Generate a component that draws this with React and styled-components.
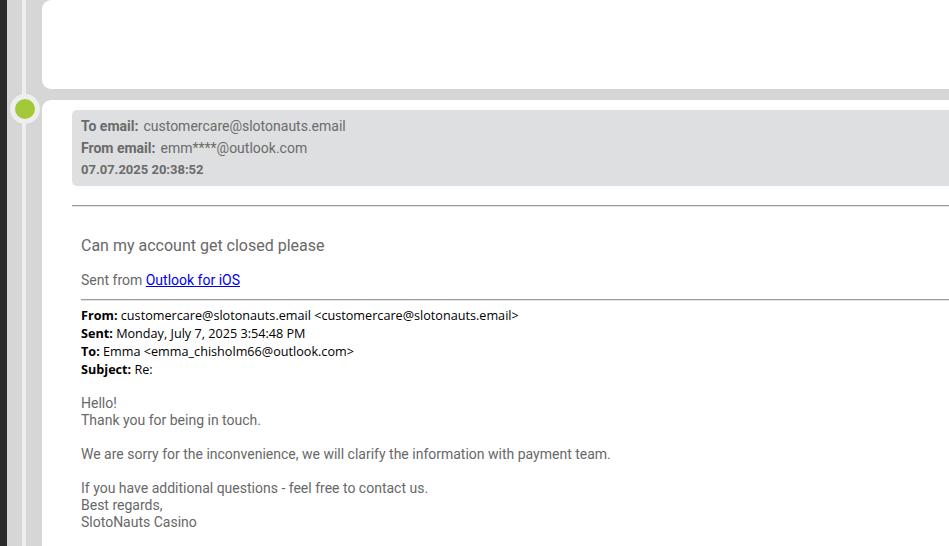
import React from 'react';
import styled, { createGlobalStyle } from 'styled-components';

const Global = createGlobalStyle`
  html, body { margin: 0; padding: 0; }
  body {
    background: #d6d6d6;
    font-family: Roboto, "Liberation Sans", sans-serif;
  }
`;

const Page = styled.div`
  display: flex;
  height: 546px;
  overflow: hidden;
`;

const Edge = styled.div`
  width: 7px;
  flex: none;
  background: #2b2b2b;
`;

const Timeline = styled.div`
  flex: 1;
  min-width: 0;
  overflow: hidden;
  background:
    linear-gradient(to right, transparent 15px, #eeeeef 15px, #eeeeef 19px, transparent 19px),
    #d6d6d6;
  display: flex;
  flex-direction: column;
  gap: 11px;
`;

const Entry = styled.div`
  display: grid;
  grid-template-columns: 35px 1fr;
`;

const Rail = styled.div`
  display: flex;
  justify-content: center;
  align-items: flex-start;
`;

const Dot = styled.div`
  width: 30px;
  height: 30px;
  box-sizing: border-box;
  border-radius: 50%;
  background: #a3c93a;
  border: 5px solid #eeeeef;
  margin-top: -6px;
`;

const Card = styled.div`
  background: #fff;
  border-radius: 9px;
  margin-right: -20px;
  height: ${(p) => (p.$height ? `${p.$height}px` : 'auto')};
  padding: ${(p) => p.$padding || '0'};
`;

const InfoBox = styled.div`
  background: #dedfe0;
  border-radius: 5px;
  padding: 5px 9px;
`;

const InfoRow = styled.div`
  font-size: ${(p) => (p.$small ? '13px' : '14px')};
  font-weight: ${(p) => (p.$bold ? 700 : 400)};
  line-height: 22px;
  color: #6b6b6b;
`;

const Label = styled.b`
  font-weight: 700;
  color: #6a6a6a;
  margin-right: 5px;
`;

const Rule = styled.hr`
  margin: ${(p) => p.$margin};
  border: 0;
  border-top: 1px solid #9a9a9a;
  border-bottom: 1px solid #e2e2e2;
  height: 0;
`;

const Body = styled.div`
  padding-left: 9px;
  color: #686868;
`;

const Question = styled.div`
  margin-top: 29px;
  font-size: 16px;
  line-height: 20px;
`;

const SentFrom = styled.div`
  margin-top: 16px;
  font-size: 14px;
  line-height: 17px;
`;

const Link = styled.a`
  color: #0000ee;
  text-decoration: underline;
`;

const Header = styled.div`
  margin-top: 5px;
  font-family: "Open Sans", "Liberation Sans", sans-serif;
  font-size: 12.65px;
  line-height: 18px;
  color: #000;
`;

const HeaderLine = styled.div`
  white-space: nowrap;
`;

const Paragraph = styled.p`
  margin: ${(p) => (p.$first ? '17px' : '17px')} 0 0;
  font-size: 14px;
  line-height: 17px;
  color: #686868;
`;

export default function App() {
  return (
    <>
      <Global />
      <Page>
        <Edge />
        <Timeline>
          <Entry>
            <Rail />
            <Card $height={89} />
          </Entry>
          <Entry>
            <Rail>
              <Dot />
            </Rail>
            <Card $padding="10px 0 40px 30px">
              <InfoBox>
                <InfoRow>
                  <Label>To email:</Label>customercare@slotonauts.email
                </InfoRow>
                <InfoRow>
                  <Label>From email:</Label>emm****@outlook.com
                </InfoRow>
                <InfoRow $small $bold>07.07.2025 20:38:52</InfoRow>
              </InfoBox>
              <Rule $margin="19px 0 0" />
              <Body>
                <Question>Can my account get closed please</Question>
                <SentFrom>
                  Sent from <Link href="#">Outlook for iOS</Link>
                </SentFrom>
                <Rule $margin="10px 0 0" />
                <Header>
                  <HeaderLine>
                    <b>From:</b> customercare@slotonauts.email &lt;customercare@slotonauts.email&gt;
                  </HeaderLine>
                  <HeaderLine>
                    <b>Sent:</b> Monday, July 7, 2025 3:54:48 PM
                  </HeaderLine>
                  <HeaderLine>
                    <b>To:</b> Emma &lt;emma_chisholm66@outlook.com&gt;
                  </HeaderLine>
                  <HeaderLine>
                    <b>Subject:</b> Re:
                  </HeaderLine>
                </Header>
                <Paragraph $first>
                  Hello!
                  <br />
                  Thank you for being in touch.
                </Paragraph>
                <Paragraph>
                  We are sorry for the inconvenience, we will clarify the information with payment team.
                </Paragraph>
                <Paragraph>
                  If you have additional questions - feel free to contact us.
                  <br />
                  Best regards,
                  <br />
                  SlotoNauts Casino
                </Paragraph>
              </Body>
            </Card>
          </Entry>
        </Timeline>
      </Page>
    </>
  );
}
